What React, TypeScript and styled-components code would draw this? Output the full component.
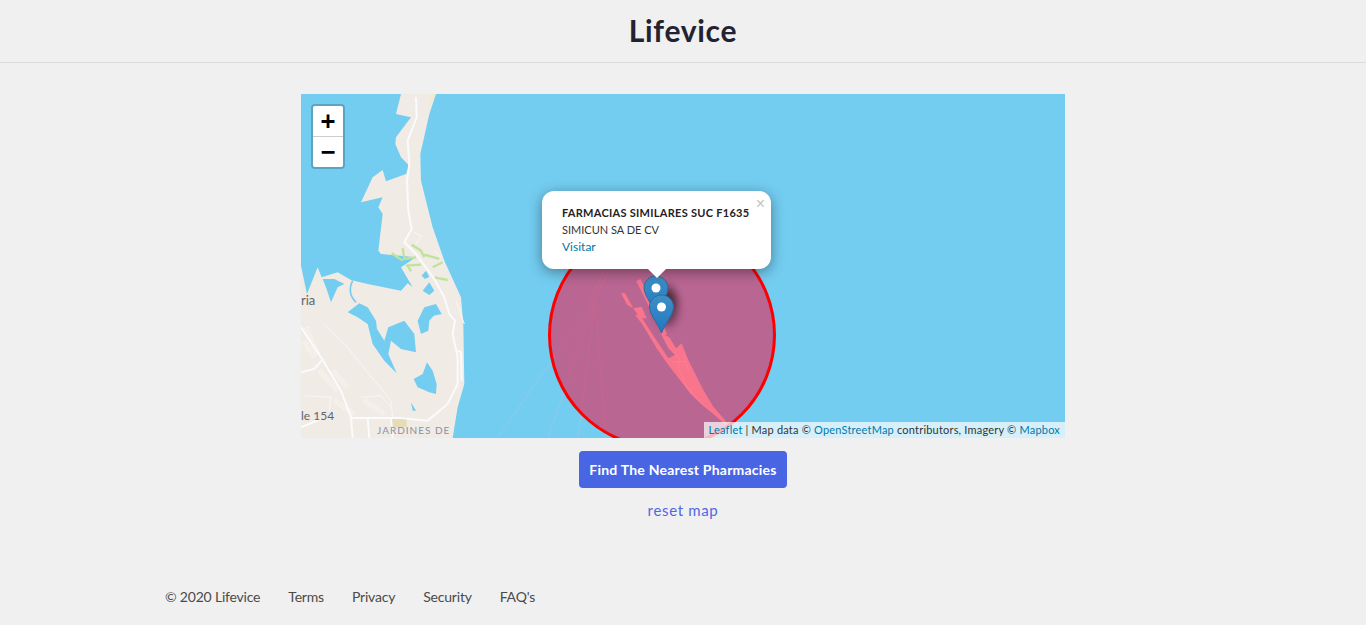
import React from 'react';
import styled, {createGlobalStyle} from 'styled-components';

const WATER = '#73cdf1';
const LAND = '#f0ebe4';
const LINK = '#0078a8';
const FONT = `Lato, 'Open Sans', sans-serif`;

// all coordinates below are traced from the picture at 3x, so the groups scale them back
const MAINLAND = 'M300 0L405 0L385 60L358 180L360 260L395 400L430 500L480 610L487 690L490 870L470 940L455 1032L0 1032L0 515L18 600L50 520L62 550L110 535L150 558L200 570L300 590L320 568L335 580L300 520L345 490L240 480L232 470L245 360L232 340L245 310L180 325L215 250L245 228L255 262L315 240L325 215L300 190L283 150L285 130L330 70L285 60Z';

const LAGOONS = [
    'M140 655L175 628L200 640L225 680L228 705L250 740L262 700L310 680L340 720L345 775L300 765L270 740L262 780L287 838L250 800L215 750L200 690L170 670Z',
    'M350 680L370 640L405 630L422 660L398 665L385 680L382 710L360 720Z',
    'M338 855L365 840L378 805L395 830L407 870L405 900L385 895L350 880Z',
    'M330 925L345 950L335 950Z',
    'M365 590L385 565L400 590L385 603Z',
    'M362 545L375 530L385 548L372 555Z',
    'M65 555L100 555L130 570L110 580L90 625L75 580Z',
];

const ROADS = [
    'M345 10L347 70L320 140L325 210L318 260L322 350L332 405L310 445L345 480L400 555L430 610L445 660L462 680L455 720L470 790L470 870L440 930L380 980L300 972L150 972',
    'M0 700L60 790L120 890L150 970L155 1032',
    'M470 770L480 775L482 860',
    'M0 835L40 825L62 800',
    'M200 972L205 1032M270 972L275 1032M60 975L0 1000',
];

const THIN_ROADS = [
    'M70 690L130 750L270 920L275 970',
    'M340 415L360 425L345 450M400 470L420 490M465 620L490 690',
    'M10 905L90 910L85 950M180 910L240 905L270 940',
];

const GREENS = [
    'M272 478L305 500M305 462L310 495L345 490',
    'M332 452L360 470L370 490M370 482L415 495',
    'M315 515L360 512M320 515L330 532M395 520L425 505M400 550L440 558',
];

const ISLAND = 'M362 160L388 172L408 205L425 190L445 240L490 330L520 380L555 420L562 440L530 410L490 378L450 340L420 300L385 255L350 205L305 130L285 105L300 105L345 175L385 235L405 225L385 205Z';
const ISLAND_BLOB = 'M280 85L305 80L320 115L300 115Z';
const ISLAND_TINY = 'M243 40L255 40L280 85L262 75Z';
const ISLAND_TOP = 'M295 0L340 90L375 165';
const ISLAND_STREETS = 'M400 215L420 240L415 265L440 320L490 375M430 225L445 270M395 245L440 245';

const Marker = ({x, y}: {x: number; y: number}) => (
    <g transform={`translate(${x} ${y})`}>
        <path d="M12.5 .5C5.8 .5 .5 5.8 .5 12.5C.5 20 8.5 28 12.5 38.5C16.5 28 24.5 20 24.5 12.5C24.5 5.8 19.2 .5 12.5 .5Z"
              fill="url(#pin)" stroke="#2e6c97"/>
        <circle cx="12.5" cy="12.5" r="4.5" fill="#fff"/>
    </g>
);

const MapDrawing = () => (
    <MapSvg viewBox="301 94 764 344">
        <defs>
            <linearGradient id="pin" x1="0" y1="0" x2="0" y2="1">
                <stop offset="0" stopColor="#3f8fc4"/>
                <stop offset="1" stopColor="#2078c4"/>
            </linearGradient>
            <filter id="soft" x="-50%" y="-50%" width="200%" height="200%">
                <feGaussianBlur stdDeviation="4"/>
            </filter>
        </defs>
        <rect x="301" y="94" width="764" height="344" fill={WATER}/>
        <g transform="translate(301 94) scale(.3333)">
            <path d={MAINLAND} fill={LAND}/>
            <path d="M385 30L405 0L392 0L380 40Z" fill="#f1ecc4"/>
            <rect x="272" y="970" width="45" height="30" fill="#e5dcb8"/>
            {LAGOONS.map((d) => <path key={d} d={d} fill={WATER}/>)}
            <path d="M155 560C140 590 150 610 165 625" fill="none" stroke={WATER} strokeWidth="5"/>
            <path d="M270 490L345 490L300 505Z" fill={WATER}/>
            <path d="M15 700L50 780M55 830L110 890M95 830L140 880M100 920L160 960M190 920L250 960M10 745L40 790"
                  fill="none" stroke="#f8f6f2" strokeWidth="16" strokeDasharray="3 4"/>
            {GREENS.map((d) => <path key={d} d={d} fill="none" stroke="#bfe39c" strokeWidth="7"/>)}
            {THIN_ROADS.map((d) => <path key={d} d={d} fill="none" stroke="#f9f7f4" strokeWidth="3"/>)}
            {ROADS.map((d) => <path key={d} d={d} fill="none" stroke="#fbfbfd" strokeWidth="6"/>)}
        </g>
        <path d="M610 268L595 300L497 438M595 300L548 438M595 300L578 438M595 300L606 438M605 268L590 302"
              fill="none" stroke="#9cc6e6" strokeWidth=".8"/>
        <g transform="translate(540 280) scale(.3333)">
            <path d={ISLAND} fill={LAND}/>
            <path d={ISLAND_BLOB} fill={LAND}/>
            <path d={ISLAND_TINY} fill={LAND}/>
            <path d={ISLAND_TOP} fill="none" stroke={LAND} strokeWidth="14"/>
            <path d={ISLAND_STREETS} fill="none" stroke="#fbfbfd" strokeWidth="3"/>
        </g>
        <MapLabel x="301" y="305" $size={13}>ria</MapLabel>
        <MapLabel x="301" y="420" $size={12}>le 154</MapLabel>
        <MapLabel x="377" y="434" $size={10} $spaced>JARDINES DE</MapLabel>
        <circle cx="662" cy="335" r="112.5" fill="#ff0033" fillOpacity=".5" stroke="#ff0000" strokeWidth="3"/>
        <ellipse cx="667" cy="308" rx="11" ry="18" fill="#000" opacity=".42" filter="url(#soft)"/>
        <ellipse cx="666" cy="298" rx="10" ry="14" fill="#000" opacity=".3" filter="url(#soft)"/>
        <Marker x={643.5} y={275.5}/>
        <Marker x={649} y={294.5}/>
    </MapSvg>
);

export default function App() {
    return (
        <Page>
            <GlobalStyle/>
            <Header><Logo>Lifevice</Logo></Header>
            <Main>
                <MapFrame>
                    <MapDrawing/>
                    <ZoomControl>
                        <ZoomButton>+</ZoomButton>
                        <ZoomButton>−</ZoomButton>
                    </ZoomControl>
                    <Popup>
                        <CloseMark>×</CloseMark>
                        <PopupTitle>FARMACIAS SIMILARES SUC F1635</PopupTitle>
                        <PopupLine>SIMICUN SA DE CV</PopupLine>
                        <PopupLink>Visitar</PopupLink>
                        <PopupTip/>
                    </Popup>
                    <Attribution>
                        <MapLink>Leaflet</MapLink> | Map data © <MapLink>OpenStreetMap</MapLink> contributors, Imagery © <MapLink>Mapbox</MapLink>
                    </Attribution>
                </MapFrame>
                <FindButton>Find The Nearest Pharmacies</FindButton>
                <ResetLink>reset map</ResetLink>
            </Main>
            <Footer>
                <FooterItem>© 2020 Lifevice</FooterItem>
                <FooterItem>Terms</FooterItem>
                <FooterItem>Privacy</FooterItem>
                <FooterItem>Security</FooterItem>
                <FooterItem>FAQ's</FooterItem>
            </Footer>
        </Page>
    );
}

const GlobalStyle = createGlobalStyle`
  html, body {
    margin: 0;
    background: #f0f0f0;
  }
`

const Page = styled.div`
  height: 625px;
  overflow: hidden;
  font-family: ${FONT};
`

const Header = styled.header`
  box-sizing: border-box;
  height: 63px;
  padding-bottom: 3px;
  border-bottom: 1px solid #dcdcdc;
  display: flex;
  align-items: center;
  justify-content: center;
`

const Logo = styled.h1`
  margin: 0;
  font-size: 30px;
  font-weight: 700;
  letter-spacing: 0.7px;
  color: #222230;
`

const Main = styled.main`
  display: flex;
  flex-direction: column;
  align-items: center;
  padding-top: 31px;
`

const MapFrame = styled.div`
  position: relative;
  width: 764px;
  height: 344px;
  overflow: hidden;
`

const MapSvg = styled.svg`
  display: block;
  width: 100%;
  height: 100%;
`

const MapLabel = styled.text<{$size: number; $spaced?: boolean}>`
  font-family: ${FONT};
  font-size: ${p => p.$size}px;
  fill: ${p => p.$spaced ? '#8a8fa8' : '#60656c'};
  letter-spacing: ${p => p.$spaced ? '1px' : '0'};
`

const ZoomControl = styled.div`
  position: absolute;
  left: 10px;
  top: 10px;
  width: 30px;
  border: 2px solid rgba(0, 0, 0, 0.2);
  border-radius: 4px;
  background-clip: padding-box;
`

const ZoomButton = styled.div`
  height: 30px;
  overflow: hidden;
  background: #fff;
  color: #000;
  font: bold 24px/30px 'DejaVu Sans Mono', monospace;
  text-align: center;

  &:first-child {
    border-bottom: 1px solid #ccc;
    border-radius: 2px 2px 0 0;
  }

  &:last-child {
    border-radius: 0 0 2px 2px;
  }
`

const Popup = styled.div`
  position: absolute;
  left: 241px;
  top: 97px;
  box-sizing: border-box;
  width: 229px;
  height: 78px;
  padding: 13px 20px;
  background: #fff;
  border-radius: 12px;
  box-shadow: 0 3px 14px rgba(0, 0, 0, 0.4);
  font-size: 12px;
  line-height: 17px;
  color: #333;
`

const PopupTitle = styled.div`
  font-size: 11px;
  font-weight: 700;
  letter-spacing: 0.28px;
  color: #222;
  white-space: nowrap;
`

const PopupLine = styled.div`
  font-size: 11px;
  white-space: nowrap;
`

const PopupLink = styled.div`
  color: ${LINK};
`

const CloseMark = styled.span`
  position: absolute;
  right: 6px;
  top: 5px;
  font: 16px/16px Tahoma, 'Liberation Sans', sans-serif;
  color: #c3c3c3;
`

const PopupTip = styled.span`
  position: absolute;
  left: 105px;
  bottom: -9px;
  width: 0;
  height: 0;
  border-left: 10px solid transparent;
  border-right: 10px solid transparent;
  border-top: 10px solid #fff;
`

const Attribution = styled.div`
  position: absolute;
  right: 0;
  bottom: 0;
  height: 16px;
  padding: 0 5px;
  background: rgba(255, 255, 255, 0.7);
  font-size: 11px;
  letter-spacing: 0.2px;
  line-height: 16px;
  color: #333;
  white-space: nowrap;
`

const MapLink = styled.span`
  color: ${LINK};
`

const FindButton = styled.button`
  margin-top: 13px;
  width: 208px;
  height: 37px;
  padding: 0;
  border: none;
  border-radius: 4px;
  background: #4865e4;
  color: #fff;
  font-family: ${FONT};
  font-size: 14px;
  font-weight: 700;
  letter-spacing: 0.22px;
`

const ResetLink = styled.a`
  margin-top: 12px;
  color: #4f68e6;
  font-size: 15px;
  letter-spacing: 0.66px;
  line-height: 20px;
`

const Footer = styled.footer`
  display: flex;
  gap: 28px;
  padding: 67px 0 0 165px;
  color: #4a4a4a;
  font-size: 14px;
  letter-spacing: -0.2px;
  line-height: 20px;
`

const FooterItem = styled.span`
  white-space: nowrap;
`
